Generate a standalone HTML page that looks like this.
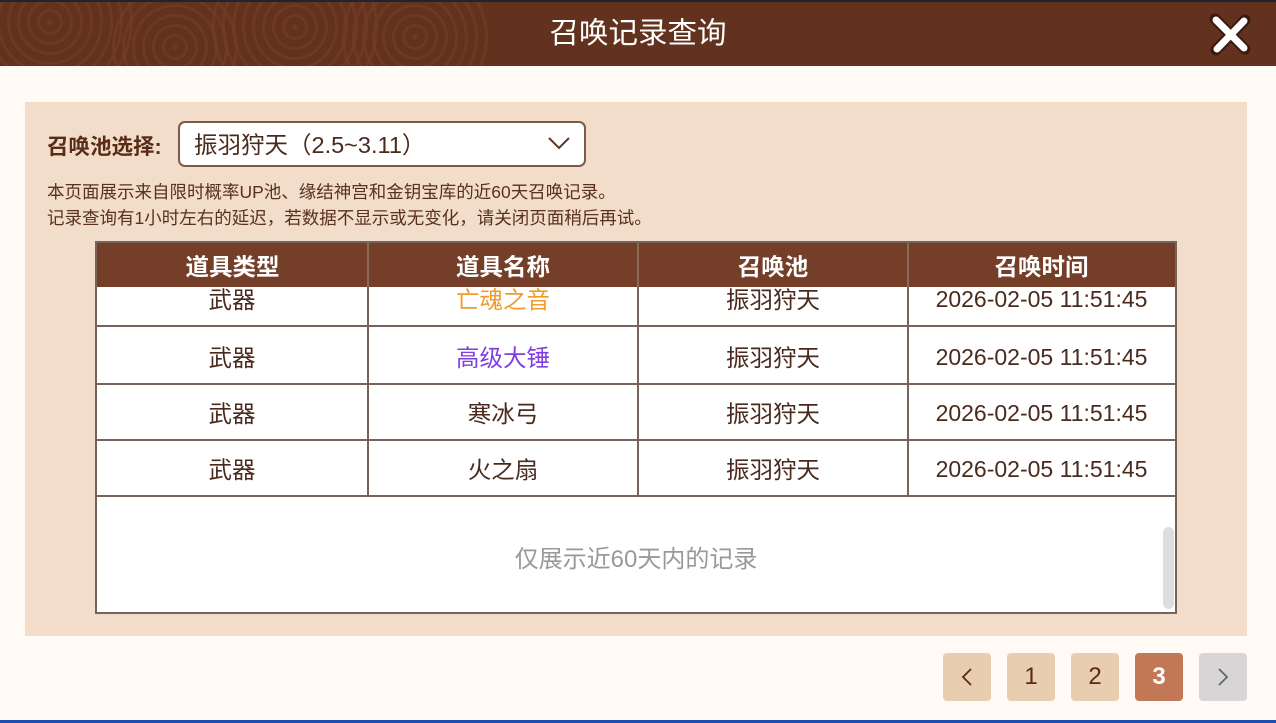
<!DOCTYPE html>
<html><head><meta charset="utf-8"><style>
*{margin:0;padding:0;box-sizing:border-box}
body{width:1276px;height:723px;overflow:hidden;background:#fffaf4;font-family:"Liberation Sans","Noto Sans CJK SC",sans-serif;position:relative}
.top{position:absolute;left:0;top:0;width:1276px;height:66px;background:#62321f;border-top:2px solid #1e2430;overflow:hidden}
.ring{position:absolute;border-radius:50%;background:repeating-radial-gradient(circle,rgba(120,60,35,.55) 0 3px,transparent 3px 10px)}
.title{position:absolute;left:0;right:0;top:12px;text-align:center;color:#fff;font-size:29.5px;line-height:40px}
.panel{position:absolute;left:25px;top:102px;width:1222px;height:534px;background:#f1ddca}
.lbl{position:absolute;left:47px;top:130px;font-size:21.5px;font-weight:bold;color:#5a2c18}
.sel{position:absolute;left:178px;top:121px;width:408px;height:46px;background:#fff;border:2px solid #7b5a4a;border-radius:7px;font-size:23.5px;color:#4a2a1c;padding:3px 0 0 14px}
.note{position:absolute;left:47px;font-size:17.5px;color:#5a3020;white-space:nowrap}
.tbl{position:absolute;left:95px;top:241px;width:1082px;height:373px;border:2px solid #76645c;background:#fff;overflow:hidden}
.hd{position:absolute;left:0;top:0;width:1078px;height:44px;background:#753e28;color:#fff;font-weight:bold;font-size:23.5px;z-index:2}
.c{position:absolute;text-align:center;top:0;height:100%;display:flex;align-items:center;justify-content:center;white-space:nowrap}
.row{position:absolute;left:0;width:1078px;height:56px;border-bottom:2px solid #76645c;font-size:23.5px;color:#4a2a1c}
.t{font-size:23px;padding-top:2px}
.vl{position:absolute;top:0;width:2px;background:#76645c}
.pg{position:absolute;top:653px;width:48px;height:48px;border-radius:4px;background:#e9cdaf;color:#5a2a18;font-size:24px;display:flex;align-items:center;justify-content:center}
</style></head><body>
<div class="top">
<div class="ring" style="left:-40px;top:-70px;width:180px;height:180px"></div>
<div class="ring" style="left:110px;top:-20px;width:130px;height:130px"></div>
<div class="ring" style="left:210px;top:-60px;width:170px;height:170px"></div>
<div class="ring" style="left:340px;top:-40px;width:150px;height:150px"></div>
<div class="title">召唤记录查询</div>
<svg style="position:absolute;left:1207px;top:11px" width="46" height="44" viewBox="0 0 46 44"><path d="M8 6 L38 36 M38 7 L9 37" stroke="#3a1a10" stroke-width="11" stroke-linecap="round"/><path d="M9 7 L37 35 M37 8 L10 36" stroke="#fff" stroke-width="7" stroke-linecap="round"/></svg>
</div>
<div class="panel"></div>
<div class="lbl">召唤池选择:</div>
<div class="sel">振羽狩天（2.5~3.11）<svg style="position:absolute;right:14px;top:13px" width="22" height="14"><path d="M1 2 L11 12 L21 2" fill="none" stroke="#5a3a2a" stroke-width="2"/></svg></div>
<div class="note" style="top:179px">本页面展示来自限时概率UP池、缘结神宫和金钥宝库的近60天召唤记录。</div>
<div class="note" style="top:205px">记录查询有1小时左右的延迟，若数据不显示或无变化，请关闭页面稍后再试。</div>
<div class="tbl">
<div class="hd"><div class="c" style="left:0;width:271px">道具类型</div><div class="c" style="left:271px;width:270px">道具名称</div><div class="c" style="left:541px;width:270px">召唤池</div><div class="c" style="left:811px;width:267px">召唤时间</div>
<div class="vl" style="left:270px;height:44px;background:#8a6a5a"></div><div class="vl" style="left:540px;height:44px;background:#8a6a5a"></div><div class="vl" style="left:810px;height:44px;background:#8a6a5a"></div></div>
<div class="row" style="top:28px"><div class="c" style="left:0;width:270px">武器</div><div class="c" style="left:271px;width:270px;color:#f39a2a">亡魂之音</div><div class="c" style="left:541px;width:270px">振羽狩天</div><div class="c t" style="left:811px;width:267px">2026-02-05 11:51:45</div></div>
<div class="row" style="top:86px"><div class="c" style="left:0;width:270px">武器</div><div class="c" style="left:271px;width:270px;color:#7f3fe0">高级大锤</div><div class="c" style="left:541px;width:270px">振羽狩天</div><div class="c t" style="left:811px;width:267px">2026-02-05 11:51:45</div></div>
<div class="row" style="top:142px"><div class="c" style="left:0;width:270px">武器</div><div class="c" style="left:271px;width:270px">寒冰弓</div><div class="c" style="left:541px;width:270px">振羽狩天</div><div class="c t" style="left:811px;width:267px">2026-02-05 11:51:45</div></div>
<div class="row" style="top:198px"><div class="c" style="left:0;width:270px">武器</div><div class="c" style="left:271px;width:270px">火之扇</div><div class="c" style="left:541px;width:270px">振羽狩天</div><div class="c t" style="left:811px;width:267px">2026-02-05 11:51:45</div></div>
<div class="vl" style="left:270px;height:254px"></div><div class="vl" style="left:540px;height:254px"></div><div class="vl" style="left:810px;height:254px"></div>
<div style="position:absolute;left:0;width:1078px;top:296px;text-align:center;font-size:24px;color:#999">仅展示近60天内的记录</div>
<div style="position:absolute;left:1066px;top:284px;width:11px;height:82px;border-radius:6px;background:#dedede"></div>
</div>
<div class="pg" style="left:943px"><svg width="14" height="20"><path d="M11 2 L3 10 L11 18" fill="none" stroke="#5a2a18" stroke-width="1.8"/></svg></div>
<div class="pg" style="left:1007px">1</div>
<div class="pg" style="left:1071px">2</div>
<div class="pg" style="left:1135px;background:#c27757;color:#fff;font-weight:bold">3</div>
<div class="pg" style="left:1199px;background:#d7d5d6"><svg width="14" height="20"><path d="M3 2 L11 10 L3 18" fill="none" stroke="#666" stroke-width="1.8"/></svg></div>
<div style="position:absolute;left:0;top:720px;width:1276px;height:3px;background:#1a4fb0"></div>
</body></html>
